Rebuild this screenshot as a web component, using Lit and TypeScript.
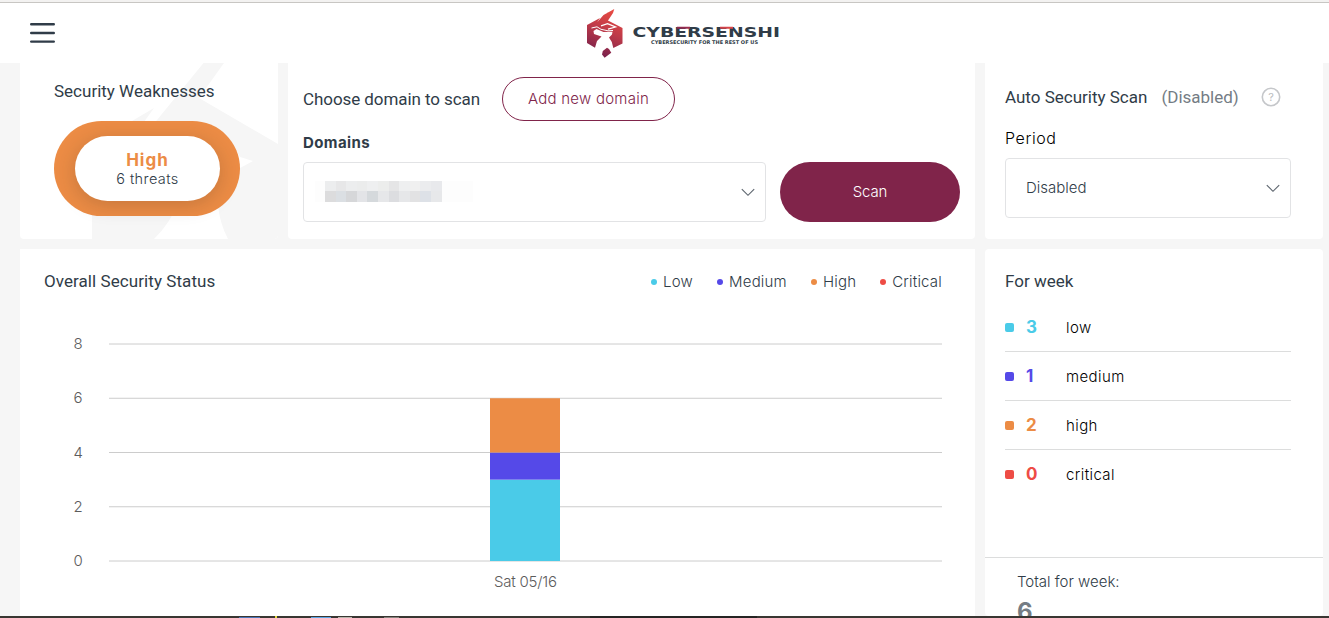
import { LitElement, html, css, svg } from "lit";
import { customElement } from "lit/decorators.js";

const LEVELS = [
  { name: "Low", color: "#4acbe8", count: 3 },
  { name: "Medium", color: "#5549e8", count: 1 },
  { name: "High", color: "#ec8c45", count: 2 },
  { name: "Critical", color: "#ee4c45", count: 0 },
];

const REDACTED = [
  ["#ecedee", "#e7e7e8", "#ecedee", "#ebecec", "#eeeff0", "#ecedec", "#e5e5e6", "#eeeff0", "#f0f0f0", "#ebecee", "#e8e9ec"],
  ["#dcdcdd", "#dbdfe3", "#d6d7d9", "#e3e4e7", "#d5d9dc", "#e6e7e9", "#dcdde0", "#e6e7e9", "#e2e2e3", "#dde1e7", "#e7e8ea"],
];

@customElement("brand-logo")
class BrandLogo extends LitElement {
  static styles = css`
    :host { display: block; line-height: 0; }
    .name { font: bold 14.5px "DejaVu Sans", sans-serif; fill: #303c48; }
    .tag { font: bold 5px "DejaVu Sans", sans-serif; fill: #303c48; }
  `;
  render() {
    return html`<svg width="196" height="54" viewBox="585 6 196 54">
      <defs>
        <linearGradient id="g" gradientUnits="userSpaceOnUse" x1="616" y1="12" x2="597" y2="56">
          <stop offset="0" stop-color="#e84a42" />
          <stop offset="0.45" stop-color="#bd3a49" />
          <stop offset="1" stop-color="#76204c" />
        </linearGradient>
        <linearGradient id="r"><stop offset="0" stop-color="#8a2850" /><stop offset="1" stop-color="#e04848" /></linearGradient>
      </defs>
      <path fill="url(#g)" d="M614.3 9 L608.5 11.8 L603 17.5 L598 25 L604 22.6 L608 20.5 L622.5 28 V43.5 L613.3 48 L611.8 42 L609 37.5 L612 34.5 L612.5 31.8 L603.5 32 L596.5 29 L593.5 31 L594 34 L601.5 36.5 L597 41 L595 47.7 L587 43 V25 L600 18 L597 22.5 L603.5 15 Z
        M614.3 9 L613 13 L607 22 L601 25 L597.5 26 L602 17.5 L608.5 11.8 Z
        M607 47.8 L602.8 51 L602 54.5 L604.6 57.8 L611.3 52.7 L609 49 Z" />
      <path fill="none" stroke="#fff" stroke-width="1.3" d="M601 25.8 L607.5 23.7 L615.5 27 L608 29.2" />
      <path fill="none" stroke="#fff" stroke-width="1" d="M591.5 28 L597 26.8 L601 29.3 L608 30.8 L613 30.5" />
      <text class="name" x="632.5" y="37.3" textLength="147.5" lengthAdjust="spacingAndGlyphs">CYBERSENSHI</text>
      <path d="M677 26.7H690V28.7H677ZM720 26.7H733V28.7H720Z" fill="url(#r)" />
      <text class="tag" x="651" y="44" textLength="107" lengthAdjust="spacingAndGlyphs">CYBERSECURITY FOR THE REST OF US</text>
    </svg>`;
  }
}

@customElement("select-box")
class SelectBox extends LitElement {
  static styles = css`
    :host { display: flex; box-sizing: border-box; height: 60px; align-items: center; justify-content: space-between;
      padding: 0 10px 0 20px; border: 1px solid #e2e3e5; border-radius: 4px; background: #fff; }
  `;
  render() {
    return html`<slot></slot><svg width="14" height="9" viewBox="0 0 14 9"><path d="M.8 1.2 7 7.3l6.2-6.1" fill="none" stroke="#5d656e" stroke-width="1.15" /></svg>`;
  }
}

@customElement("status-chart")
class StatusChart extends LitElement {
  static styles = css`
    :host { display: block; line-height: 0; }
    text { font: 300 15px Inter, sans-serif; fill: #5c5c5c; }
  `;
  render() {
    let top = 241;
    return html`<svg width="898" height="280" viewBox="0 0 898 280">
      ${[8, 6, 4, 2, 0].map((v) => {
        const y = 241 - v * 27.125;
        return svg`<path d="M65 ${y}H898" stroke="#ccc" /><text x="29.5" y=${y + 5}>${v}</text>`;
      })}
      ${LEVELS.map((l) => {
        const h = l.count * 27.125;
        top -= h;
        return svg`<rect x="446" y=${top} width="70" height=${h} fill=${l.color} />`;
      })}
      <text x="450" y="267" textLength="63">Sat 05/16</text>
    </svg>`;
  }
}

@customElement("app-root")
class AppRoot extends LitElement {
  static styles = css`
    :host { display: flex; flex-direction: column; height: 618px; overflow: hidden; background: #f6f6f6;
      color: #303c48; font: 300 15px/20px Inter, sans-serif; }
    * { box-sizing: border-box; }
    .header { flex: none; height: 63px; background: #fff; border-top: 2px solid #f3f2f1; display: grid;
      grid-template-columns: 555px auto; box-shadow: inset 0 1px #c8c6c3; padding: 4px 0 0 30px; }
    .menu { margin-top: 16px; }
    .grid { flex: 1; min-height: 0; display: grid; grid-template: 176px 1fr / 258px 687px 338px; gap: 10px; padding-left: 20px; }
    .card { background: #fff; border-radius: 4px; overflow: hidden; }
    .top { border-radius: 0 0 4px 4px; }
    .heading { font: 400 17px/24px Roboto, sans-serif; white-space: nowrap; }
    .weak { display: grid; grid-template: 176px / 258px; }
    .weak > * { grid-area: 1 / 1; }
    .weak-body { padding: 16px 0 0 34px; }
    .ring { margin-top: 18px; width: 186px; height: 95px; border-radius: 48px; background: #ec8c45; padding: 15px 20px 15px 21px; }
    .pill { height: 65px; border-radius: 33px; background: #fff; box-shadow: 0 4px 20px rgba(60, 45, 30, .22);
      display: flex; flex-direction: column; align-items: center; padding-top: 14px; line-height: 17px; }
    .pill b { font-size: 17px; font-weight: 700; color: #ec8c45; letter-spacing: 1px; line-height: 20px; }
    .pill span { font-size: 14.5px; font-weight: 300; letter-spacing: .4px; }
    .choose { padding: 14px 15px 0; }
    .line { display: flex; align-items: center; gap: 22px; }
    .choose .heading { width: 177px; letter-spacing: -.08px; }
    .add { width: 173px; height: 44px; border: 1px solid #80244a; border-radius: 22px; color: #80244a;
      display: flex; align-items: center; justify-content: center; letter-spacing: .25px; }
    .label { margin: 12px 0 9px; font-weight: 700; letter-spacing: .4px; }
    .form { display: grid; grid-template-columns: 463px 180px; gap: 14px; }
    .mosaic { display: grid; grid-template-columns: 10px repeat(11, 10.6px) 31px; grid-auto-rows: 10.5px; margin: -2px 0 0 -9px; }
    .faint { background: #fdfdfd; }
    .scan { border-radius: 30px; background: #80244a; color: #fff; display: flex; align-items: center; justify-content: center; letter-spacing: -.1px; }
    .auto { padding: 22px 32px 0 20px; }
    .auto .line { gap: 14px; }
    .muted { color: #747c84; }
    .help { margin-left: 8px; }
    .help text { font: 400 11px Inter, sans-serif; fill: #bbbdc0; }
    .period { margin: 19px 0 10px; color: #000; font-size: 16px; line-height: 20px; letter-spacing: .6px; }
    .chart { grid-column: span 2; padding: 20px 33px 0 24px; border-radius: 0; }
    .bar { display: flex; align-items: center; justify-content: space-between; height: 26px; }
    .bar .heading { margin-top: -2px; letter-spacing: .07px; }
    .legend { display: flex; gap: 24px; }
    .legend span { display: flex; align-items: center; gap: 6px; letter-spacing: .2px; }
    .legend i { width: 6px; height: 6px; border-radius: 3px; }
    status-chart { margin-top: 25px; }
    .week { padding: 20px 0 0 20px; display: flex; flex-direction: column; }
    .rows { width: 286px; margin-top: 10px; color: #000; }
    .row { height: 49px; display: grid; grid-template-columns: 21px 40px 1fr; align-items: center; border-bottom: 1px solid #dcdddd; letter-spacing: .4px; }
    .row:last-child { border: 0; height: 48px; }
    .row span { padding-top: 2px; }
    .row i { width: 9px; height: 9px; border-radius: 2px; }
    .row b { font-size: 17px; font-weight: 700; }
    .total { margin: 59px 0 0 -20px; border-top: 1px solid #dcdddd; padding: 14px 32px; letter-spacing: 0; }
    .total b { display: block; margin-top: 6px; font-size: 24px; line-height: 28px; font-weight: 700; color: #747c84; }
    .taskbar { flex: none; height: 2px; background: #393632; }
    .taskbar svg { display: block; }
  `;

  render() {
    return html`
      <div class="header">
        <svg class="menu" width="25" height="22" viewBox="0 0 25 22"><path d="M1.2 2.2H23.8M1.2 11H23.8M1.2 19.6H23.8" stroke="#303c48" stroke-width="2.4" stroke-linecap="round" /></svg>
        <brand-logo></brand-logo>
      </div>
      <div class="grid">
        <div class="card top weak">
          <svg width="258" height="176" viewBox="20 63 258 176" fill="#f6f6f6">
            <path d="M203.5 63H224L199 98 278 144V239H228Q220 224 218 206L218 180 253 161 240 157 236 150 180 125H152L157 120Z" />
            <path d="M132 121 154 108 144 122ZM92 200H180Q169 225 154 239H92Z" />
          </svg>
          <div class="weak-body">
            <div class="heading">Security Weaknesses</div>
            <div class="ring"><div class="pill"><b>High</b><span>6 threats</span></div></div>
          </div>
        </div>
        <div class="card top choose">
          <div class="line"><div class="heading">Choose domain to scan</div><div class="add">Add new domain</div></div>
          <div class="label">Domains</div>
          <div class="form">
            <select-box>
              <div class="mosaic">
                ${REDACTED.map((r) => html`<i class="faint"></i>${r.map((c) => html`<i style="background:${c}"></i>`)}<i class="faint"></i>`)}
              </div>
            </select-box>
            <div class="scan">Scan</div>
          </div>
        </div>
        <div class="card top auto">
          <div class="line">
            <div class="heading">Auto Security Scan</div><div class="heading muted">(Disabled)</div>
            <svg class="help" width="20" height="20"><circle cx="10" cy="10" r="8.7" fill="none" stroke="#c5c7ca" stroke-width="1.6" /><text x="10" y="14" text-anchor="middle">?</text></svg>
          </div>
          <div class="period">Period</div>
          <select-box><span>Disabled</span></select-box>
        </div>
        <div class="card chart">
          <div class="bar">
            <div class="heading">Overall Security Status</div>
            <div class="legend">${LEVELS.map((l) => html`<span><i style="background:${l.color}"></i>${l.name}</span>`)}</div>
          </div>
          <status-chart></status-chart>
        </div>
        <div class="card week">
          <div class="heading">For week</div>
          <div class="rows">
            ${LEVELS.map((l) => html`<div class="row"><i style="background:${l.color}"></i><b style="color:${l.color}">${l.count}</b><span>${l.name.toLowerCase()}</span></div>`)}
          </div>
          <div class="total">Total for week:<b>6</b></div>
        </div>
      </div>
      <div class="taskbar"><svg width="1329" height="2">
        <path d="M590 0H757V2H590Z" fill="#252423" />
        <path d="M239 1h21v1h-21z" fill="#4a74b8" /><path d="M275 0h2v2h-2z" fill="#e8dc3c" />
        <path d="M311 1h20v1h-20z" fill="#5aa5e6" /><path d="M338 1h14v1h-14z" fill="#b9b5ac" /><path d="M384 1h15v1h-15z" fill="#87847e" />
      </svg></div>
    `;
  }
}
